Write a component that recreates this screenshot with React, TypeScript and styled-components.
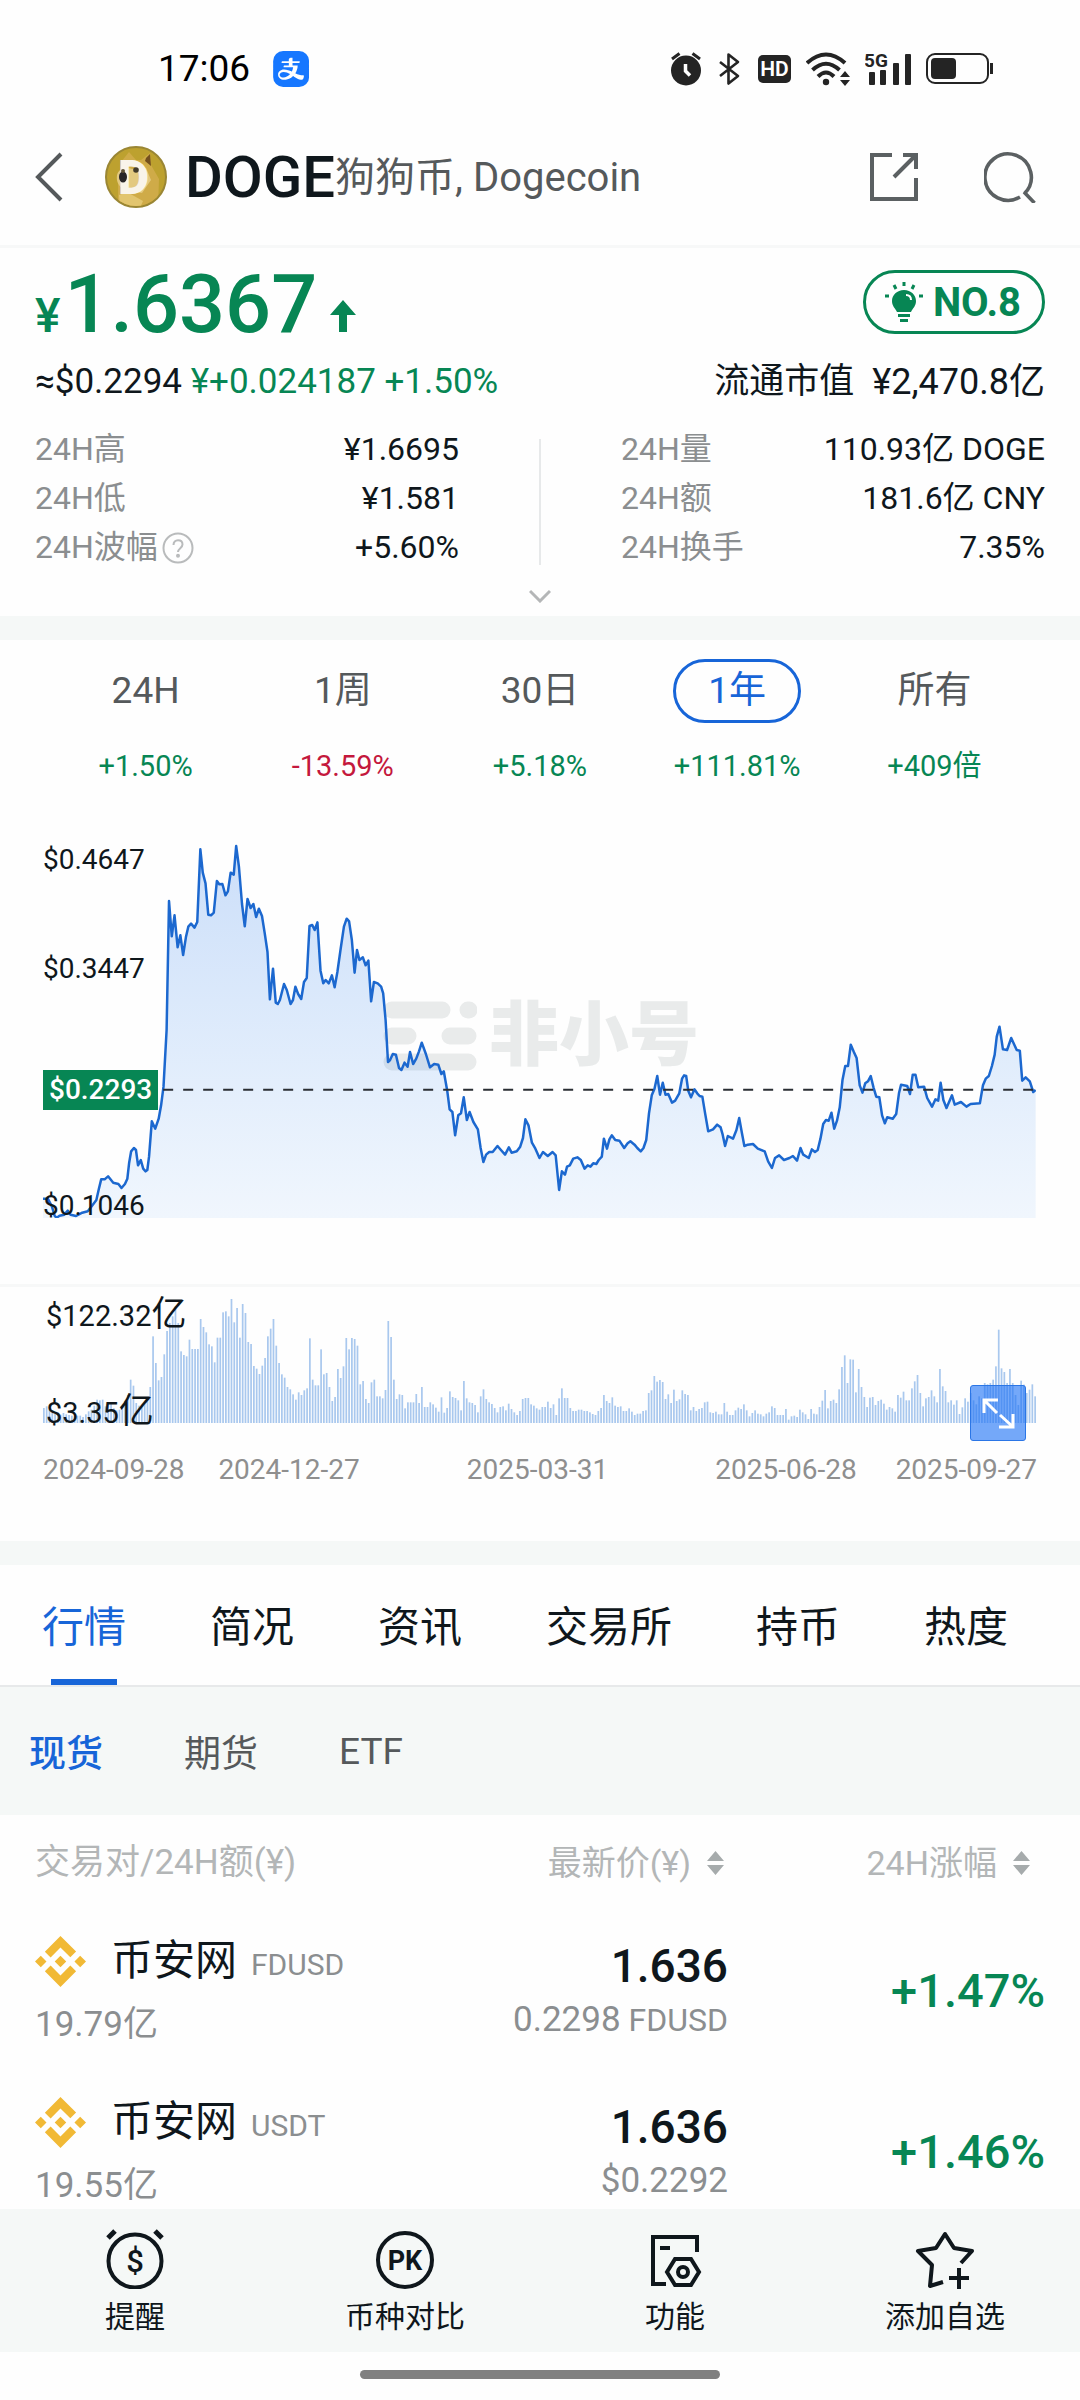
import React, { useState } from 'react';
import styled, { createGlobalStyle } from 'styled-components';
import { AiFillAlipaySquare } from 'react-icons/ai';
import { SiBinance } from 'react-icons/si';

const color = {
  ink: '#0f171c',
  body: '#55595b',
  muted: '#8b8e90',
  faint: '#b3b6b7',
  line: '#e7e9ea',
  band: '#f5f8f7',
  green: '#078654',
  red: '#c4183c',
  blue: '#1765d8',
};

const GlobalStyle = createGlobalStyle`
  * { box-sizing: border-box; }
  body {
    margin: 0;
    background: #fefefe;
    color: ${color.ink};
    font-family: Roboto, 'Noto Sans CJK SC', sans-serif;
  }
  button {
    margin: 0;
    padding: 0;
    border: 0;
    background: none;
    color: inherit;
    font: inherit;
    cursor: pointer;
  }
  svg { display: block; }
`;

const Page = styled.div`
  display: flex;
  flex-direction: column;
  min-height: 100vh;
`;

/* ---------- status bar ---------- */

const StatusBar = styled.div`
  display: flex;
  align-items: center;
  justify-content: space-between;
  padding: 34px 87px 5px 158px;
  color: #242424;
`;

const StatusGroup = styled.div<{ $gap: number }>`
  display: flex;
  align-items: center;
  gap: ${(p) => p.$gap}px;
  height: 70px;
`;

const Clock = styled.time`
  color: #000;
  font-size: 37px;
  line-height: 42px;
`;

const PayIcon = styled(AiFillAlipaySquare)`
  color: #1677ff;
  clip-path: inset(5px round 10px);
`;

const HdBadge = styled.span`
  width: 33px;
  border-radius: 5px;
  background: #242424;
  color: #fff;
  font-size: 21px;
  font-weight: 600;
  line-height: 28px;
  text-align: center;
`;

/* ---------- header ---------- */

const Header = styled.header`
  display: flex;
  align-items: center;
  height: 139px;
  padding: 0 44px 0 35px;
  border-bottom: 3px solid #f7f8f8;
  color: ${color.body};
`;

const CoinTitle = styled.h1`
  display: flex;
  align-items: center;
  flex: 1;
  margin: 0 0 0 42px;
  font-weight: 400;
`;

const Ticker = styled.span`
  margin-left: 18px;
  color: ${color.ink};
  font-size: 58px;
  font-weight: 500;
  line-height: 72px;
`;

const CoinName = styled.span`
  padding-top: 2px;
  font-size: 40px;
  line-height: 48px;
`;

const HeaderActions = styled.div`
  display: flex;
  gap: 65px;
`;

/* ---------- price summary ---------- */

const Summary = styled.section`
  padding: 22px 35px 0;
`;

const Spread = styled.div`
  display: flex;
  align-items: flex-start;
  justify-content: space-between;
`;

const Price = styled.p`
  display: flex;
  align-items: baseline;
  margin: 0;
  color: ${color.green};
  font-size: 81px;
  font-weight: 500;
  line-height: 70px;

  svg { margin-left: 12px; }
`;

const Currency = styled.small`
  margin-right: 4px;
  font-size: 48px;
  line-height: 48px;
`;

const RankBadge = styled.button`
  display: flex;
  align-items: center;
  gap: 10px;
  height: 64px;
  padding: 0 21px 0 19px;
  border: 3px solid ${color.green};
  border-radius: 32px;
  color: ${color.green};
  font-size: 40px;
  font-weight: 700;
`;

const QuoteRow = styled(Spread)`
  margin-top: 20px;
  font-size: 35px;
  line-height: 44px;
`;

const Up = styled.span`
  color: ${color.green};
`;

const MarketCap = styled.span`
  display: flex;
  gap: 18px;
`;

const CapValue = styled.span`
  font-size: 36px;
`;

const StatsRow = styled.div`
  display: grid;
  grid-template-columns: 424px 1fr 424px;
  margin-top: 21px;
  font-size: 32px;
`;

const StatList = styled.dl`
  margin: 0;
`;

const Stat = styled.div`
  display: flex;
  justify-content: space-between;
  line-height: 49px;

  dt {
    display: flex;
    align-items: center;
    gap: 4px;
    color: ${color.muted};
  }
  dd { margin: 0; }
`;

const Divider = styled.div`
  justify-self: center;
  width: 2px;
  margin: 14px 0 7px;
  background: ${color.line};
`;

const ExpandButton = styled.button`
  display: block;
  margin: 0 auto;
  padding: 17px 20px 13px;
`;

const Band = styled.div`
  height: 24px;
  background: ${color.band};
`;

/* ---------- chart ---------- */

const RangeTabs = styled.div`
  display: grid;
  grid-template-columns: repeat(5, 1fr);
  padding: 19px 47px 0;
`;

const RangeTab = styled.button`
  display: flex;
  flex-direction: column;
  align-items: center;
  gap: 22px;
`;

const RangeLabel = styled.span<{ $active: boolean }>`
  min-width: 128px;
  border: 3px solid ${(p) => (p.$active ? color.blue : 'transparent')};
  border-radius: 32px;
  color: ${(p) => (p.$active ? color.blue : color.body)};
  font-size: 37px;
  line-height: 58px;
`;

const RangeChange = styled.span<{ $down: boolean }>`
  color: ${(p) => (p.$down ? color.red : color.green)};
  font-size: 29px;
  line-height: 42px;
`;

const PriceChart = styled.div`
  position: relative;
  margin: 53px 44px 66px 43px;

  > svg { width: 100%; height: 378px; }
`;

const Watermark = styled.div`
  position: absolute;
  top: 161px;
  left: 340px;
  display: flex;
  align-items: center;
  gap: 12px;
  color: #e9ebeb;
  font-size: 70px;
  font-weight: 900;
  line-height: 70px;

  + svg { position: relative; }
`;

const AxisLabel = styled.span<{ $top: number; $left?: number }>`
  position: absolute;
  top: ${(p) => p.$top}px;
  left: ${(p) => p.$left ?? 0}px;
  font-size: 28px;
  line-height: 40px;
`;

const PriceTag = styled(AxisLabel)`
  padding: 0 6px;
  background: ${color.green};
  color: #fff;
  font-weight: 500;
`;

const VolumeLabel = styled(AxisLabel)`
  font-size: 29px;
`;

const Unit = styled.span`
  font-size: 35px;
`;

const VolumeArea = styled.div`
  border-top: 3px solid #f7f8f8;
`;

const VolumeChart = styled.div`
  position: relative;
  margin: 9px 44px 0 43px;

  > svg { width: 100%; height: 127px; }
`;

const FullscreenButton = styled.button`
  position: absolute;
  right: 10px;
  bottom: -18px;
  display: grid;
  place-items: center;
  width: 56px;
  height: 56px;
  border: 1px solid #2b76e6;
  border-radius: 3px;
  background: rgba(31, 114, 245, 0.62);
`;

const Dates = styled.div`
  display: flex;
  margin: 27px 43px 51px;
  color: #8f8f8f;
  font-size: 28px;
  line-height: 40px;
`;

const MiddleDates = styled.div`
  display: flex;
  flex: 1;
  justify-content: space-between;
  padding: 0 39px 0 34px;
`;

/* ---------- tabs ---------- */

const MainTabs = styled.nav`
  display: flex;
  gap: 84px;
  height: 122px;
  padding: 0 42px;
  border-bottom: 2px solid ${color.line};
`;

const MainTab = styled.button<{ $active: boolean }>`
  position: relative;
  padding-top: 5px;
  color: ${(p) => (p.$active ? color.blue : color.ink)};
  font-size: 42px;
  line-height: 54px;
  white-space: nowrap;

  &::after {
    content: '';
    position: absolute;
    right: 9px;
    bottom: 0;
    left: 9px;
    height: 6px;
    background: ${(p) => (p.$active ? color.blue : 'transparent')};
  }
`;

const SubTabs = styled.nav`
  display: flex;
  gap: 81px;
  height: 128px;
  padding: 0 29px;
  background: ${color.band};
`;

const SubTab = styled.button<{ $active: boolean }>`
  color: ${(p) => (p.$active ? color.blue : color.body)};
  font-size: 37px;
  font-weight: ${(p) => (p.$active ? 500 : 400)};
`;

/* ---------- markets ---------- */

const Markets = styled.main`
  flex: 1;
  padding: 0 35px;
`;

const MarketTable = styled.table`
  width: 100%;
  border-collapse: collapse;
  table-layout: fixed;

  th {
    height: 95px;
    padding: 0;
    color: ${color.faint};
    font-size: 35px;
    font-weight: 400;
    line-height: 40px;
    text-align: left;
    white-space: nowrap;
  }
  td { padding: 24px 0 23px; }
  tr:last-child td { padding-bottom: 0; }
`;

const Column = styled.col<{ $width?: number }>`
  width: ${(p) => (p.$width ? `${p.$width}px` : 'auto')};
`;

const SortButton = styled.button<{ $inset: number }>`
  display: flex;
  align-items: center;
  gap: 15px;
  margin-left: auto;
  padding-right: ${(p) => p.$inset}px;
  font-size: 34px;
`;

const Exchange = styled.div`
  display: flex;
  align-items: baseline;
  gap: 14px;
  height: 54px;
  margin-bottom: 14px;
  font-size: 42px;
  line-height: 54px;

  svg {
    align-self: center;
    margin-right: 11px;
    color: #f1b935;
  }
`;

const Quote = styled.small`
  color: ${color.muted};
  font-size: 30px;
  line-height: 30px;
`;

const Turnover = styled.div`
  color: ${color.muted};
  font-size: 35px;
  line-height: 46px;
`;

const LastPrice = styled.div`
  padding-top: 4px;
  font-size: 46px;
  font-weight: 500;
  line-height: 54px;
  text-align: right;
`;

const PairPrice = styled.div`
  color: ${color.muted};
  font-size: 35px;
  line-height: 54px;
  text-align: right;

  small {
    font-size: 32px;
    line-height: 32px;
  }
`;

const Change = styled.div`
  color: ${color.green};
  font-size: 47px;
  font-weight: 500;
  line-height: 54px;
  text-align: right;
`;

/* ---------- bottom bar ---------- */

const BottomBar = styled.nav`
  display: grid;
  grid-template-columns: repeat(4, 1fr);
  background: ${color.band};
`;

const BottomItem = styled.button`
  display: flex;
  flex-direction: column;
  align-items: center;
  gap: 8px;
  padding: 20px 0 15px;
  font-size: 30px;
  line-height: 40px;
`;

const HomeArea = styled.div`
  display: flex;
  justify-content: center;
  padding: 18px 0 21px;
`;

const HomeIndicator = styled.div`
  width: 33.3%;
  height: 9px;
  border-radius: 5px;
  background: #808080;
`;

/* ---------- data ---------- */

const priceFirstHalf =
  '126,1136 140,1136 152,1160 160,1188 166,1193 174,1187 188,1184 198,1172 206,1184 222,1188 240,1178 256,1174 268,1158 281,1140 288,1108 295,1078 305,1078 315,1069 330,1088 345,1092 354,1104 364,1092 371,1076 376,1030 382,994 390,984 396,990 402,1036 410,1020 417,1046 424,1054 429,1050 434,1010 442,904 452,926 462,896 469,856 476,800 485,630 492,243 500,349 508,286 517,382 525,346 533,405 541,352 548,320 556,311 566,323 574,306 583,88 590,158 598,190 606,284 614,286 622,278 631,183 638,193 647,192 656,226 663,214 671,158 680,164 687,78 695,140 704,252 712,319 720,237 729,264 737,252 745,291 753,266 762,288 770,340 778,396 785,538 794,446 802,548 808,552 814,540 826,492 834,510 845,552 852,540 859,500 867,522 876,537 884,486 892,474 900,318 908,315 915,330 923,307 932,452 940,490 947,480 956,490 965,466 973,502 981,456 990,390 1000,320 1008,296 1015,304 1023,360 1031,458 1038,390 1045,420 1055,412 1063,436 1071,422 1079,544 1087,486 1098,490 1108,500 1114,520 1121,600 1128,726 1134,720 1142,702 1151,704 1160,744 1167,750 1176,728 1185,740 1192,696 1201,732 1210,716 1218,694 1226,668 1238,702 1250,742 1262,732 1274,734 1283,762 1290,754 1300,812 1307,868 1315,876 1323,946 1332,886 1340,880 1348,832 1357,900 1365,876 1376,906 1389,928 1397,984 1405,1026 1413,1004 1422,996 1432,996 1446,978 1456,990 1468,1004 1479,982 1487,998 1502,994 1512,980 1520,954 1527,898 1536,916 1546,968 1556,986';

const priceSecondHalf =
  '0,1014 10,996 24,1008 38,996 47,1006 57,1110 65,1054 74,1064 80,1040 88,1036 98,1016 110,1012 120,1020 131,1046 140,1036 148,1040 156,1030 165,1032 172,1020 181,1010 187,956 196,986 203,958 210,946 220,960 232,962 246,984 256,970 264,964 276,974 284,984 294,994 302,984 310,960 318,880 326,826 334,806 342,768 350,824 358,788 366,824 374,822 385,848 394,842 406,820 414,776 420,766 426,768 432,812 440,832 450,808 458,820 465,828 473,830 481,880 490,934 504,928 516,914 526,922 532,944 539,978 547,948 562,956 572,930 580,894 588,940 595,978 605,974 620,972 634,986 654,994 664,1024 675,1044 684,1014 696,1006 710,1020 726,1014 736,1008 748,1022 758,984 766,1004 782,1014 791,988 800,996 808,990 816,956 824,912 832,900 840,902 848,878 856,926 864,902 872,862 880,780 888,738 896,738 904,674 913,696 921,714 930,796 938,818 946,790 954,784 962,768 970,802 978,830 987,832 995,886 1003,910 1010,892 1026,896 1036,882 1044,820 1050,794 1068,798 1076,822 1084,764 1092,764 1100,802 1117,800 1126,834 1140,860 1150,838 1158,842 1165,788 1173,840 1182,864 1198,826 1206,854 1224,846 1240,860 1252,852 1279,850 1288,796 1296,776 1305,768 1314,738 1322,704 1328,650 1336,620 1346,688 1358,690 1370,654 1386,690 1395,692 1402,782 1412,772 1424,784 1434,816 1441,810';

const shift = (points: string, dx: number, dy: number) =>
  points.split(' ').map((pair) => {
    const [x, y] = pair.split(',').map(Number);
    return `${x + dx},${y + dy}`;
  });

const pricePoints = [...shift(priceFirstHalf, -126, -60), ...shift(priceSecondHalf, 1442, -60)].join(' ');

const volumes = [
  45, 50, 40, 30, 28, 32, 25, 30, 26, 24, 22, 20, 22, 22, 18, 26, 35, 40, 52, 70, 68, 70, 50, 55, 60, 44, 38, 40, 52, 66, 84, 130, 112, 60, 52, 46, 58, 74, 108, 260, 180, 128, 138, 206, 276, 300, 320, 350, 300, 215, 204, 200, 250, 222, 222, 222, 312, 288, 272, 236, 230, 182, 256, 256, 332, 335, 320, 372, 302, 345, 256, 357, 330, 243, 237, 171, 163, 147, 172, 195, 260, 283, 312, 232, 180, 146, 136, 108, 101, 86, 70, 92, 84, 98, 104, 254, 130, 113, 113, 221, 146, 150, 108, 66, 78, 162, 135, 170, 255, 221, 255, 252, 232, 116, 126, 72, 60, 122, 130, 80, 80, 74, 99, 306, 258, 130, 72, 86, 84, 44, 62, 62, 62, 87, 60, 108, 48, 48, 62, 56, 46, 34, 77, 31, 45, 95, 78, 75, 68, 38, 126, 74, 62, 60, 54, 32, 80, 101, 72, 62, 57, 45, 32, 48, 50, 38, 58, 42, 32, 24, 36, 72, 75, 75, 56, 52, 44, 40,
  48, 48, 64, 45, 56, 24, 74, 104, 75, 75, 45, 36, 36, 40, 40, 36, 36, 32, 27, 24, 36, 45, 84, 66, 60, 77, 52, 48, 50, 36, 36, 44, 34, 24, 28, 28, 36, 38, 90, 98, 141, 124, 129, 123, 72, 86, 60, 100, 66, 71, 98, 87, 84, 38, 48, 36, 42, 45, 62, 64, 32, 30, 34, 26, 26, 60, 34, 24, 24, 38, 46, 42, 56, 38, 20, 30, 38, 28, 26, 20, 28, 32, 50, 45, 24, 24, 24, 42, 10, 20, 22, 18, 40, 32, 26, 12, 42, 28, 26, 48, 67, 99, 44, 66, 70, 60, 101, 168, 203, 120, 191, 190, 92, 162, 108, 78, 48, 76, 78, 54, 66, 70, 58, 40, 48, 44, 34, 84, 76, 94, 68, 68, 104, 125, 144, 90, 50, 74, 78, 98, 80, 62, 162, 110, 96, 62, 68, 55, 68, 27, 47, 74, 64, 90, 68, 56, 80, 74, 120, 116, 120, 130, 170, 280, 164, 153, 120, 162, 120, 84, 54, 127, 115, 90, 100, 116, 80,
];

const ranges = [
  { label: '24H', change: '+1.50%' },
  { label: '1周', change: '-13.59%' },
  { label: '30日', change: '+5.18%' },
  { label: '1年', change: '+111.81%' },
  { label: '所有', change: '+409倍' },
];

const mainTabs = ['行情', '简况', '资讯', '交易所', '持币', '热度'];
const subTabs = ['现货', '期货', 'ETF'];

const markets = [
  { exchange: '币安网', quote: 'FDUSD', turnover: '19.79亿', last: '1.636', pair: '0.2298', unit: 'FDUSD', change: '+1.47%' },
  { exchange: '币安网', quote: 'USDT', turnover: '19.55亿', last: '1.636', pair: '$0.2292', unit: '', change: '+1.46%' },
];

/* ---------- icons ---------- */

const AlarmIcon = () => (
  <svg width="30" height="34" viewBox="0 0 30 34" fill="none">
    <circle cx="15" cy="18.500" r="15" fill="#242424" />
    <path d="M1 7 8.500 1.500M29 7 21.500 1.500" stroke="#242424" strokeWidth="3" />
    <path d="M14.500 12v7l4.500 4.500" stroke="#fff" strokeWidth="3.500" />
  </svg>
);

const BluetoothIcon = () => (
  <svg width="27" height="34" viewBox="-3 0 27 34" fill="none" stroke="#242424" strokeWidth="2.600">
    <path d="M1 10l18 14-9.500 7.500V2.500L19 10 1 24" strokeLinejoin="round" />
  </svg>
);

const WifiIcon = () => (
  <svg width="44" height="34" viewBox="0 0 44 34" fill="none" stroke="#242424" strokeWidth="4">
    <path d="M1 11Q20-6 39 11M6.500 18Q20 5.500 33.500 18M12 24.500Q20 16.500 28 24.500" />
    <circle cx="20" cy="30" r="3.200" fill="#242424" stroke="none" />
    <path d="M34 25h10l-5-6zM34 28h10l-5 6z" fill="#242424" stroke="none" />
  </svg>
);

const SignalIcon = () => (
  <svg width="46" height="46" viewBox="0 -6 46 46" fill="#242424">
    <text x="-1" y="15" fontSize="19" fontWeight="700" fontFamily="Roboto, sans-serif">5G</text>
    <rect x="4" y="20" width="6" height="13" rx="1" />
    <rect x="15" y="18" width="6" height="15" rx="1" />
    <rect x="28" y="11" width="6" height="22" rx="1" />
    <rect x="40" y="2" width="6" height="31" rx="1" />
  </svg>
);

const BatteryIcon = () => (
  <svg width="67" height="32" viewBox="0 0 67 32" fill="none">
    <rect x="1" y="1" width="61" height="29" rx="8" stroke="#242424" strokeWidth="2" />
    <rect x="5" y="5" width="25" height="21" rx="4" fill="#242424" />
    <path d="M65.500 10v11" stroke="#242424" strokeWidth="3" />
  </svg>
);

const BackIcon = () => (
  <svg width="28" height="50" viewBox="0 0 28 50" fill="none" stroke="#55595b" strokeWidth="4">
    <path d="M26 2 3 25l23 23" />
  </svg>
);

const DogeIcon = () => (
  <svg width="62" height="62" viewBox="0 0 62 62">
    <defs>
      <clipPath id="coin"><circle cx="31" cy="31" r="29" /></clipPath>
    </defs>
    <circle cx="31" cy="31" r="30" fill="#bda12f" stroke="#9a8634" strokeWidth="2" />
    <g clipPath="url(#coin)">
      <path d="M13 62V37l3-21 8-10 7 8h5l9-7 1 12 8 14-1 29z" fill="#cfab48" />
      <path d="m41 12 4-4 1 12-6-5z" fill="#73501e" />
      <path d="M12 29c2-7 10-8 15-6l14-1 5 12-9 13-17-3c-6-3-9-8-8-15z" fill="#e3c980" />
      <path d="M14 49l8-3 16 9-3 7H15z" fill="#e2c56f" />
    </g>
    <text x="13" y="48" fontSize="48" fontWeight="900" fill="#f9f4ea" fontFamily="Roboto, sans-serif">D</text>
    <ellipse cx="18" cy="31" rx="4" ry="5.500" fill="#292628" />
    <circle cx="31" cy="24" r="2.800" fill="#423a2a" />
    <circle cx="18" cy="25" r="2" fill="#5f5134" />
  </svg>
);

const ShareIcon = () => (
  <svg width="50" height="50" viewBox="0 0 50 50" fill="none" stroke="#5b6062" strokeWidth="4">
    <path d="M23 3H3v44h44V26M34 3h13v14M47 3 25 25" />
  </svg>
);

const SearchIcon = () => (
  <svg width="52" height="52" viewBox="0 0 52 52" fill="none" stroke="#5b6062" strokeWidth="3.600">
    <path d="M36 46A23.200 23.200 0 1 1 40.500 42.500M40 41l10.500 11" />
  </svg>
);

const UpArrow = () => (
  <svg width="28" height="32" viewBox="0 0 28 32" fill={color.green}>
    <path d="M14 0 27 15h-9v17h-8V15H1z" />
  </svg>
);

const BulbIcon = () => (
  <svg width="38" height="40" viewBox="0 0 38 40" fill={color.green}>
    <path d="M19 8c-7 0-12 5-12 11 0 5 3 7 5 11h14c2-4 5-6 5-11 0-6-5-11-12-11z" />
    <path d="M13 32h12v3H13zM15 37h8v3h-8z" />
    <path d="M21 13c3 0 5 2 5 5" stroke="#fff" strokeWidth="2" fill="none" />
    <path d="M19 0v4M9 3l2 4M29 3l-2 4M0 14h4M34 14h4" stroke={color.green} strokeWidth="3" />
  </svg>
);

const HelpIcon = () => (
  <svg width="32" height="32" viewBox="0 0 32 32" fill="none" stroke="#b9bbbc" strokeWidth="2">
    <circle cx="16" cy="16" r="14.500" />
    <path d="M11.500 13c0-3 2-4.800 4.500-4.800s4.500 1.600 4.500 4.300c0 3.500-4.500 3.800-4.500 7.500" />
    <circle cx="16" cy="23.800" r="1" fill="#b9bbbc" />
  </svg>
);

const ChevronDown = () => (
  <svg width="22" height="14" viewBox="0 0 22 14" fill="none" stroke="#b4b6b7" strokeWidth="3">
    <path d="m1 2 10 10L21 2" />
  </svg>
);

const WatermarkLogo = () => (
  <svg width="94" height="70" viewBox="0 0 94 70" stroke="#e9ebeb" strokeWidth="17" strokeLinecap="round">
    <path d="M9 9h50M85 9h1M9 35h16M67 35h18M9 61h76" />
  </svg>
);

const FullscreenIcon = () => (
  <svg width="34" height="34" viewBox="0 0 34 34" fill="none" stroke="#fff" strokeWidth="3">
    <path d="M3 17V4h14M4 5l12 12M32 18v13H18M31 30 19 19" />
  </svg>
);

const SortIcon = () => (
  <svg width="19" height="26" viewBox="0 0 19 26" fill="#a6abac">
    <path d="M9.500 1 18 11H1zM9.500 25 18 15H1z" />
  </svg>
);

const AlertIcon = () => (
  <svg width="60" height="60" viewBox="0 0 60 60" fill="none" stroke={color.ink} strokeWidth="4">
    <circle cx="30" cy="32" r="26.500" />
    <path d="M3 9 10 2M57 9 50 2" strokeWidth="5" />
    <text x="30" y="43" fontSize="31" fontWeight="500" textAnchor="middle" fill={color.ink} stroke="none" fontFamily="Roboto, sans-serif">$</text>
  </svg>
);

const CompareIcon = () => (
  <svg width="60" height="60" viewBox="0 0 60 60" fill="none" stroke={color.ink} strokeWidth="4">
    <circle cx="30" cy="31" r="27" />
    <text x="30" y="41" fontSize="27" fontWeight="700" textAnchor="middle" fill={color.ink} stroke="none" fontFamily="Roboto, sans-serif">PK</text>
  </svg>
);

const ToolsIcon = () => (
  <svg width="60" height="60" viewBox="0 0 60 60" fill="none" stroke={color.ink} strokeWidth="4">
    <path d="M21 55H8V8h44v15M15 19h10" />
    <path d="M30 30h16l8 13-8 13H30l-8-13z" />
    <circle cx="38" cy="43" r="5" />
  </svg>
);

const StarPlusIcon = () => (
  <svg width="60" height="60" viewBox="0 0 60 60" fill="none" stroke={color.ink} strokeWidth="4">
    <path d="M28 53 15 57l2-21L3 22l18-3 9-14 9 14 18 3-11 12" strokeLinejoin="round" />
    <path d="M44 39v21M34 49h20" />
  </svg>
);

const bottomItems = [
  { label: '提醒', Icon: AlertIcon },
  { label: '币种对比', Icon: CompareIcon },
  { label: '功能', Icon: ToolsIcon },
  { label: '添加自选', Icon: StarPlusIcon },
];

/* ---------- page ---------- */

export default function App() {
  const [range, setRange] = useState('1年');
  const [tab, setTab] = useState('行情');
  const [subTab, setSubTab] = useState('现货');

  return (
    <Page>
      <GlobalStyle />
      <StatusBar>
        <StatusGroup $gap={18}>
          <Clock>17:06</Clock>
          <PayIcon size={46} />
        </StatusGroup>
        <StatusGroup $gap={15}>
          <AlarmIcon />
          <BluetoothIcon />
          <HdBadge>HD</HdBadge>
          <WifiIcon />
          <SignalIcon />
          <BatteryIcon />
        </StatusGroup>
      </StatusBar>

      <Header>
        <button aria-label="返回"><BackIcon /></button>
        <CoinTitle>
          <DogeIcon />
          <Ticker>DOGE</Ticker>
          <CoinName>狗狗币, Dogecoin</CoinName>
        </CoinTitle>
        <HeaderActions>
          <button aria-label="分享"><ShareIcon /></button>
          <button aria-label="搜索"><SearchIcon /></button>
        </HeaderActions>
      </Header>

      <Summary>
        <Spread>
          <Price>
            <Currency>¥</Currency>1.6367
            <UpArrow />
          </Price>
          <RankBadge><BulbIcon />NO.8</RankBadge>
        </Spread>
        <QuoteRow>
          <span>≈$0.2294 <Up>¥+0.024187 +1.50%</Up></span>
          <MarketCap><span>流通市值</span><CapValue>¥2,470.8亿</CapValue></MarketCap>
        </QuoteRow>
        <StatsRow>
          <StatList>
            <Stat><dt>24H高</dt><dd>¥1.6695</dd></Stat>
            <Stat><dt>24H低</dt><dd>¥1.581</dd></Stat>
            <Stat><dt>24H波幅<HelpIcon /></dt><dd>+5.60%</dd></Stat>
          </StatList>
          <Divider />
          <StatList>
            <Stat><dt>24H量</dt><dd>110.93亿 DOGE</dd></Stat>
            <Stat><dt>24H额</dt><dd>181.6亿 CNY</dd></Stat>
            <Stat><dt>24H换手</dt><dd>7.35%</dd></Stat>
          </StatList>
        </StatsRow>
        <ExpandButton aria-label="展开"><ChevronDown /></ExpandButton>
      </Summary>
      <Band />

      <section>
        <RangeTabs>
          {ranges.map((r) => (
            <RangeTab key={r.label} onClick={() => setRange(r.label)}>
              <RangeLabel $active={r.label === range}>{r.label}</RangeLabel>
              <RangeChange $down={r.change.startsWith('-')}>{r.change}</RangeChange>
            </RangeTab>
          ))}
        </RangeTabs>
        <PriceChart>
          <Watermark><WatermarkLogo />非小号</Watermark>
          <svg viewBox="0 0 2884 1134" preserveAspectRatio="none">
            <defs>
              <linearGradient id="fill" x1="0" y1="0" x2="0" y2="1">
                <stop offset="0" stopColor="#1a6fe8" stopOpacity="0.22" />
                <stop offset="1" stopColor="#1a7cf0" stopOpacity="0.06" />
              </linearGradient>
            </defs>
            <polygon points={`0,1134 ${pricePoints} 2883,1134`} fill="url(#fill)" />
            <polyline points={pricePoints} fill="none" stroke="#1c68cf" strokeWidth="2.500" strokeLinejoin="round" vectorEffect="non-scaling-stroke" />
            <path d="M349 749H2884" stroke="#2a2e33" strokeWidth="2" strokeDasharray="10 10" vectorEffect="non-scaling-stroke" />
          </svg>
          <AxisLabel $top={0}>$0.4647</AxisLabel>
          <AxisLabel $top={109}>$0.3447</AxisLabel>
          <PriceTag $top={230}>$0.2293</PriceTag>
          <AxisLabel $top={346}>$0.1046</AxisLabel>
        </PriceChart>

        <VolumeArea>
          <VolumeChart>
            <svg viewBox="0 0 2884 381" preserveAspectRatio="none" fill="#a9c8ee">
              {volumes.map((v, i) => (
                <rect key={i} x={(i * 2879) / (volumes.length - 1)} y={381 - v} width="5" height={v} />
              ))}
            </svg>
            <VolumeLabel $top={-1} $left={3}>$122.32<Unit>亿</Unit></VolumeLabel>
            <VolumeLabel $top={96} $left={3}>$3.35<Unit>亿</Unit></VolumeLabel>
            <FullscreenButton aria-label="全屏"><FullscreenIcon /></FullscreenButton>
          </VolumeChart>
          <Dates>
            <span>2024-09-28</span>
            <MiddleDates>
              <span>2024-12-27</span>
              <span>2025-03-31</span>
              <span>2025-06-28</span>
            </MiddleDates>
            <span>2025-09-27</span>
          </Dates>
        </VolumeArea>
      </section>
      <Band />

      <MainTabs>
        {mainTabs.map((t) => (
          <MainTab key={t} $active={t === tab} onClick={() => setTab(t)}>{t}</MainTab>
        ))}
      </MainTabs>
      <SubTabs>
        {subTabs.map((t) => (
          <SubTab key={t} $active={t === subTab} onClick={() => setSubTab(t)}>{t}</SubTab>
        ))}
      </SubTabs>

      <Markets>
        <MarketTable>
          <colgroup>
            <Column />
            <Column $width={292} />
            <Column $width={317} />
          </colgroup>
          <thead>
            <tr>
              <th>交易对/24H额(¥)</th>
              <th><SortButton $inset={3}>最新价(¥)<SortIcon /></SortButton></th>
              <th><SortButton $inset={14}>24H涨幅<SortIcon /></SortButton></th>
            </tr>
          </thead>
          <tbody>
            {markets.map((m) => (
              <tr key={m.quote}>
                <td>
                  <Exchange><SiBinance size={51} />{m.exchange}<Quote>{m.quote}</Quote></Exchange>
                  <Turnover>{m.turnover}</Turnover>
                </td>
                <td>
                  <LastPrice>{m.last}</LastPrice>
                  <PairPrice>{m.pair}{m.unit && <small> {m.unit}</small>}</PairPrice>
                </td>
                <td><Change>{m.change}</Change></td>
              </tr>
            ))}
          </tbody>
        </MarketTable>
      </Markets>

      <BottomBar>
        {bottomItems.map(({ label, Icon }) => (
          <BottomItem key={label}><Icon />{label}</BottomItem>
        ))}
      </BottomBar>
      <HomeArea><HomeIndicator /></HomeArea>
    </Page>
  );
}
